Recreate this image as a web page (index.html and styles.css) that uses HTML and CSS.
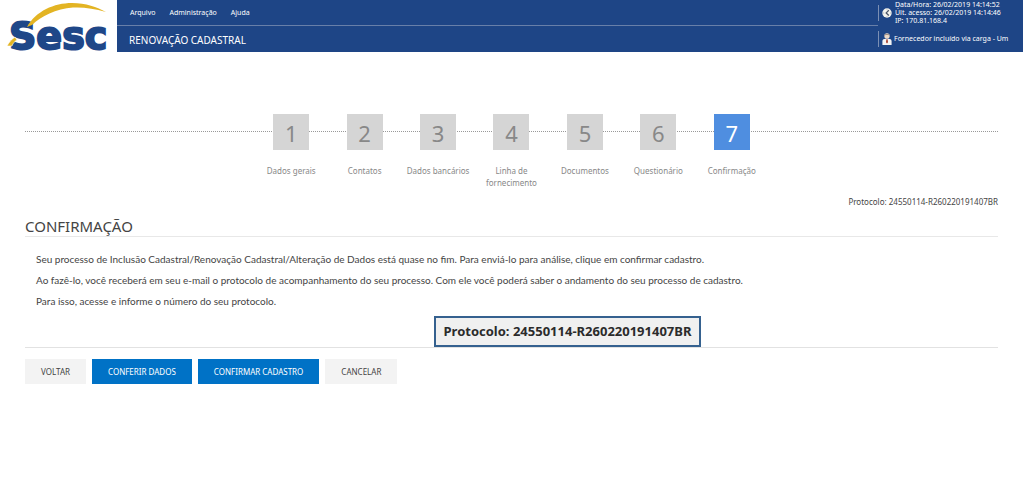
FILE: index.html
```html
<!DOCTYPE html>
<html lang="pt-BR">
<head>
<meta charset="utf-8">
<title>Sesc - Renovação Cadastral</title>
<link rel="stylesheet" href="styles.css">
</head>
<body>
<header class="header">
  <a class="brand" href="#" aria-label="Sesc">
    <svg class="logo" viewBox="0 0 117 52" aria-hidden="true">
      <text class="logo-text" x="9" y="49">Sesc</text>
      <path d="M7 46C9 42 12 39 15 37L17 40C15 41 13 43 12 46Z" fill="#e3b423" stroke="#fff" stroke-width=".6"/>
      <path d="M27 27C36 11 54 3 72 3C86 3 97 7 106 12C94 8.500 84 7 73 7.500C56 9 41 16 32 25Z" fill="#e3b423"/>
    </svg>
  </a>
  <div class="bar">
    <div class="bar-main">
      <nav class="menu">
        <a href="#">Arquivo</a>
        <a href="#">Administração</a>
        <a href="#">Ajuda</a>
      </nav>
      <div class="page-name">RENOVAÇÃO CADASTRAL</div>
    </div>
    <div class="session">
      <div class="session-row session-time">
        <svg class="session-icon" viewBox="0 0 10 10" aria-hidden="true">
          <circle cx="5" cy="5" r="4.7" fill="#f3f3ee"/>
          <path d="M6.8 2.3L4.2 4.9L6.8 7.5" fill="none" stroke="#4b5568" stroke-width="1.3"/>
          <path d="M1.2 5h1M5 .8v.8M5 8.4v.8M8.2 5h.8" stroke="#8b909a" stroke-width=".7"/>
        </svg>
        <div>Data/Hora: 26/02/2019 14:14:52<br>Últ. acesso: 26/02/2019 14:14:46<br>IP: 170.81.168.4</div>
      </div>
      <div class="session-row session-user">
        <svg class="session-icon" viewBox="0 0 10 12" aria-hidden="true">
          <circle cx="5" cy="3" r="2.7" fill="#ead9c8"/>
          <path d="M2.3 2.8C2 .4 8 .4 7.700 2.800C6 1.500 4 1.500 2.300 2.800Z" fill="#8d7d78"/>
          <path d="M.4 12V8C.4 6.500 2 5.800 3.500 5.700H6.500C8 5.800 9.600 6.500 9.600 8V12Z" fill="#f4f4f4"/>
          <path d="M4.400 6L5 6.600L5.600 6L6 9.200L5 10.500L4 9.200Z" fill="#a8402f"/>
        </svg>
        <div>Fornecedor incluído via carga - Um</div>
      </div>
    </div>
  </div>
</header>

<main class="content">
  <div class="wizard">
    <ol class="steps">
      <li class="step"><span class="number">1</span><span class="label">Dados gerais</span></li>
      <li class="step"><span class="number">2</span><span class="label">Contatos</span></li>
      <li class="step"><span class="number">3</span><span class="label">Dados bancários</span></li>
      <li class="step"><span class="number">4</span><span class="label">Linha de<br>fornecimento</span></li>
      <li class="step"><span class="number">5</span><span class="label">Documentos</span></li>
      <li class="step"><span class="number">6</span><span class="label">Questionário</span></li>
      <li class="step current" aria-current="step"><span class="number">7</span><span class="label">Confirmação</span></li>
    </ol>
  </div>
  <div class="protocol">Protocolo: 24550114-R260220191407BR</div>
  <h1 class="title">CONFIRMAÇÃO</h1>
  <section class="message">
    <p>Seu processo de Inclusão Cadastral/Renovação Cadastral/Alteração de Dados está quase no fim. Para enviá-lo para análise, clique em confirmar cadastro.</p>
    <p>Ao fazê-lo, você receberá em seu e-mail o protocolo de acompanhamento do seu processo. Com ele você poderá saber o andamento do seu processo de cadastro.</p>
    <p>Para isso, acesse e informe o número do seu protocolo.</p>
    <strong class="protocol-box">Protocolo: 24550114-R260220191407BR</strong>
  </section>
  <div class="actions">
    <button class="button" type="button">VOLTAR</button>
    <button class="button primary" type="button">CONFERIR DADOS</button>
    <button class="button primary" type="button">CONFIRMAR CADASTRO</button>
    <button class="button" type="button">CANCELAR</button>
  </div>
</main>
</body>
</html>
```

FILE: styles.css
```css
* { box-sizing: border-box; }

body {
  margin: 0;
  background: #fff;
  color: #444;
  font-family: "Noto Sans", "Open Sans", sans-serif;
  font-size: 10px;
}

.header { display: flex; }

.brand { flex: none; width: 117px; }

.logo { display: block; width: 100%; overflow: visible; }

.logo-text {
  fill: #1f4788;
  stroke: #1f4788;
  stroke-width: 2;
  font: bold 38px "DejaVu Sans", sans-serif;
}

.bar {
  flex: 1;
  display: flex;
  background: #1e4586;
  color: #fff;
}

.bar-main { flex: 1; }

.menu {
  display: flex;
  align-items: center;
  gap: 14px;
  height: 26px;
  padding-left: 13px;
  border-bottom: 1px solid #687fa9;
  font-size: 7px;
}

.menu a { color: inherit; text-decoration: none; }

.page-name {
  padding: 8px 12px 6px;
  line-height: 12px;
}

.session {
  flex: none;
  width: 145px;
  font-size: 7px;
  line-height: 8px;
  white-space: nowrap;
}

.session-row {
  display: flex;
  align-items: center;
  gap: 3px;
  height: 26px;
  padding-left: 4px;
  background: linear-gradient(#7b8fb4, #7b8fb4) left / 1px 16px no-repeat;
}

.session-icon { flex: none; width: 10px; }

.session-user { gap: 2px; }

.content { padding: 62px 25px 0; }

.wizard {
  background: linear-gradient(90deg, #999 50%, transparent 50%) 0 17px / 2px 1px repeat-x;
}

.steps {
  display: grid;
  grid-template-columns: repeat(7, 1fr);
  max-width: 514px;
  margin: 0 auto;
  padding: 0;
  list-style: none;
}

.step {
  display: flex;
  flex-direction: column;
  align-items: center;
  gap: 15px;
  color: #888;
}

.number {
  display: grid;
  place-items: center;
  width: 36px;
  height: 36px;
  padding-top: 2px;
  background: #d5d5d5;
  font-size: 22px;
  line-height: 32px;
}

.current .number { background: #4f8ee0; color: #fff; }

.label {
  font-size: 8px;
  line-height: 12px;
  text-align: center;
  white-space: nowrap;
}

.protocol {
  margin-top: 7px;
  font-size: 8px;
  line-height: 12px;
  text-align: right;
}

.title {
  margin: 8px 0 0;
  border-bottom: 1px solid #e8e8e8;
  font-size: 15px;
  font-weight: 400;
  line-height: 20px;
}

.message {
  display: flex;
  flex-direction: column;
  gap: 8px;
  padding: 16px 11px 0;
  border-bottom: 1px solid #e2e2e2;
  font-family: Lato, "Noto Sans", sans-serif;
  line-height: 13px;
}

.message p { margin: 0; }

.protocol-box {
  align-self: center;
  margin-left: 112px;
  padding: 4px 8px;
  background: #f0f0f0;
  border: 2px solid #35618f;
  color: #2b2b2b;
  font-family: "Noto Sans", "Open Sans", sans-serif;
  font-size: 13px;
  line-height: 19px;
}

.actions {
  display: flex;
  flex-wrap: wrap;
  gap: 6px;
  padding: 11px 0;
}

.button {
  padding: 6px 16px;
  border: 0;
  background: #f3f3f3;
  color: #444;
  font: 8px/13px "Noto Sans", "Open Sans", sans-serif;
}

.primary { background: #0072c6; color: #fff; }
```
